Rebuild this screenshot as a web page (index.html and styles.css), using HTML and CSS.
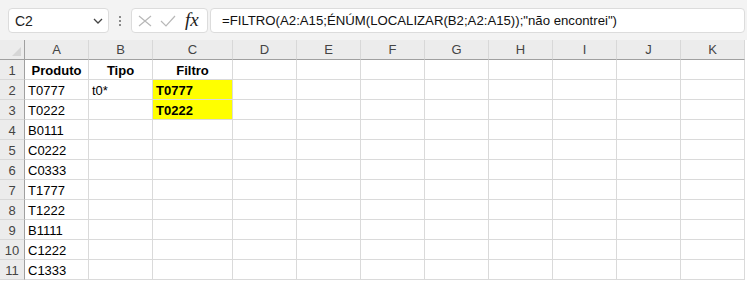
FILE: index.html
```html
<!DOCTYPE html>
<html lang="pt">

<head>
    <meta charset="UTF-8">
    <title>FILTRO</title>
    <link rel="stylesheet" href="styles.css">
</head>

<body>
    <div class="toolbar">
        <div class="name-box">
            <span>C2</span>
            <svg class="chevron" width="10" height="6" viewBox="0 0 10 6">
                <path d="M1 1 L5 5 L9 1" fill="none" stroke="#444" stroke-width="1.3"/>
            </svg>
        </div>
        <div class="grip">
            <i></i><i></i><i></i>
        </div>
        <div class="fx-box">
            <svg width="14" height="12" viewBox="0 0 14 12">
                <path d="M1 1 L13 11 M13 1 L1 11" fill="none" stroke="#b8b8b8" stroke-width="1.2"/>
            </svg>
            <svg width="16" height="12" viewBox="0 0 16 12">
                <path d="M1 6 L6 11 L15 1" fill="none" stroke="#b8b8b8" stroke-width="1.2"/>
            </svg>
            <span class="fx">fx</span>
        </div>
        <div class="formula">=FILTRO(A2:A15;ÉNÚM(LOCALIZAR(B2;A2:A15));"não encontrei")</div>
    </div>

    <div class="sheet">
        <div class="corner"></div>
        <div class="col-head">A</div>
        <div class="col-head">B</div>
        <div class="col-head">C</div>
        <div class="col-head">D</div>
        <div class="col-head">E</div>
        <div class="col-head">F</div>
        <div class="col-head">G</div>
        <div class="col-head">H</div>
        <div class="col-head">I</div>
        <div class="col-head">J</div>
        <div class="col-head">K</div>
    </div>
    <div class="sheet" id="rows"></div>

    <script>
        const data = [
            ['Produto', 'Tipo', 'Filtro'],
            ['T0777', 't0*', 'T0777'],
            ['T0222', '', 'T0222'],
            ['B0111', '', ''],
            ['C0222', '', ''],
            ['C0333', '', ''],
            ['T1777', '', ''],
            ['T1222', '', ''],
            ['B1111', '', ''],
            ['C1222', '', ''],
            ['C1333', '', '']
        ];

        const rows = document.getElementById('rows');
        data.forEach((row, i) => {
            const head = document.createElement('div');
            head.className = 'row-head';
            head.textContent = i + 1;
            rows.appendChild(head);
            for (let c = 0; c < 11; c++) {
                const cell = document.createElement('div');
                cell.className = 'cell';
                const value = row[c] || '';
                cell.textContent = value;
                if (i === 0) cell.classList.add('title');
                if (c === 2 && value && i > 0) cell.classList.add('hit');
                rows.appendChild(cell);
            }
        });
    </script>
</body>

</html>
```

FILE: styles.css
```css
body {
    margin: 0;
    width: 747px;
    height: 281px;
    overflow: hidden;
    background: #fff;
    font-family: "Liberation Sans", Arial, sans-serif;
    color: #000;
}

.toolbar {
    height: 40px;
    background: #f3f3f3;
    display: flex;
    align-items: flex-start;
    padding: 8px 2px 0 8px;
    box-sizing: border-box;
}

.name-box {
    width: 101px;
    height: 25px;
    box-sizing: border-box;
    background: #fff;
    border: 1px solid #dcdcdc;
    border-radius: 4px;
    display: flex;
    align-items: center;
    justify-content: space-between;
    padding: 0 5px 0 6px;
    font-size: 14px;
    color: #222;
}

.chevron {
    margin-top: 1px;
}

.grip {
    width: 22px;
    height: 25px;
    display: flex;
    flex-direction: column;
    align-items: center;
    justify-content: center;
    gap: 2px;
}

.grip i {
    width: 2px;
    height: 2px;
    background: #8a8a8a;
}

.fx-box {
    width: 77px;
    height: 25px;
    box-sizing: border-box;
    background: #fff;
    border: 1px solid #dcdcdc;
    border-radius: 4px;
    display: flex;
    align-items: center;
    padding: 0 6px 0 6px;
    gap: 8px;
}

.fx {
    font-family: "Liberation Serif", serif;
    font-style: italic;
    font-size: 19px;
    color: #222;
    margin-left: 1px;
    margin-top: -2px;
}

.formula {
    flex: 1;
    height: 25px;
    margin-left: 2px;
    box-sizing: border-box;
    background: #fff;
    border: 1px solid #dcdcdc;
    border-radius: 4px;
    padding: 0 0 0 11px;
    line-height: 23px;
    font-size: 13.2px;
    color: #111;
    white-space: nowrap;
}

.sheet {
    display: grid;
    grid-template-columns: 25px 64px 64px 80px repeat(8, 64px);
}

.corner,
.col-head {
    height: 20px;
    background: #ececec;
    border-bottom: 1px solid #a0a0a0;
    box-sizing: border-box;
}

.corner {
    border-right: 1px solid #a0a0a0;
    position: relative;
}

.corner::after {
    content: "";
    position: absolute;
    right: 3px;
    bottom: 3px;
    border-left: 9px solid transparent;
    border-bottom: 9px solid #d6d6d6;
}

.col-head {
    border-right: 1px solid #d8d8d8;
    font-size: 13px;
    color: #444;
    text-align: center;
    line-height: 20px;
}

.row-head {
    height: 20px;
    background: #ececec;
    border-right: 1px solid #a0a0a0;
    border-bottom: 1px solid #d8d8d8;
    box-sizing: border-box;
    font-size: 13px;
    color: #444;
    text-align: center;
    line-height: 21px;
}

.cell {
    height: 20px;
    box-sizing: border-box;
    border-right: 1px solid #dadada;
    border-bottom: 1px solid #dadada;
    font-size: 13px;
    line-height: 21px;
    padding-left: 3px;
    white-space: nowrap;
}

.cell.title {
    font-weight: bold;
    text-align: center;
    padding-left: 0;
}

.cell.hit {
    background: #ffff00;
    font-weight: bold;
}
```
